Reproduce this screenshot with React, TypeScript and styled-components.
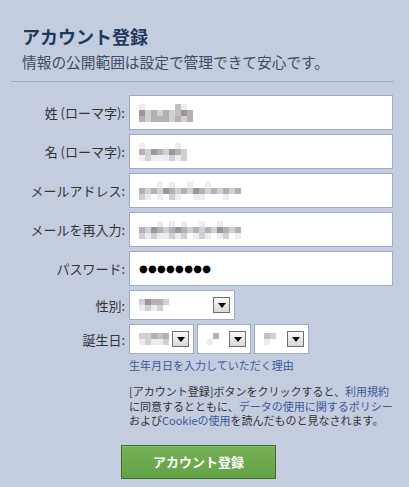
import React from 'react'
import styled, { createGlobalStyle } from 'styled-components'

const GlobalStyle = createGlobalStyle`
    html, body {
        margin: 0;
        padding: 0;
        background: #c4cce0;
    }
    body {
        font-family: 'Noto Sans CJK JP', 'Noto Sans', sans-serif;
        color: #333;
    }
`

const Page = styled.div`
    width: 409px;
    height: 487px;
    box-sizing: border-box;
    padding: 25px 15px 0 11px;
    overflow: hidden;
`
const Heading = styled.div`
    padding-left: 11px;
`
const Title = styled.h1`
    margin: 0;
    font-size: 18px;
    line-height: 22px;
    font-weight: bold;
    color: #1f3a5e;
`
const Subtitle = styled.div`
    margin-top: 6px;
    font-size: 14.7px;
    line-height: 18px;
    color: #3c4d68;
`
const Divider = styled.hr`
    margin: 10px 0 13px;
    border: 0;
    height: 1px;
    background: #9fadc6;
`
const Form = styled.div`
    display: flex;
    flex-direction: column;
    gap: 4px;
`
const Row = styled.div`
    display: grid;
    grid-template-columns: 114px auto;
    column-gap: 4px;
    align-items: center;
`
const Label = styled.label`
    font-size: 13px;
    text-align: right;
    color: #333;
    white-space: nowrap;
`
const TextBox = styled.div`
    box-sizing: border-box;
    width: 264px;
    height: 35px;
    background: #fff;
    border: 1px solid #9dabc8;
    display: flex;
    align-items: center;
    padding-left: 9px;
`
const Dots = styled.span`
    font-size: 10px;
    letter-spacing: 0.3px;
    color: #000;
    font-family: 'DejaVu Sans', sans-serif;
`
const Selects = styled.div`
    display: flex;
    gap: 3px;
`
const SelectBox = styled.div<{ $w: number }>`
    box-sizing: border-box;
    width: ${(p) => p.$w}px;
    height: 30px;
    background: #fff;
    border: 1px solid #9dabc8;
    display: flex;
    align-items: center;
    justify-content: space-between;
    padding: 0 4px 0 9px;
`
const Arrow = styled.span`
    box-sizing: border-box;
    width: 17px;
    height: 16px;
    border: 1px solid #707070;
    background: linear-gradient(#fafafa, #d8d8d8);
    display: flex;
    align-items: center;
    justify-content: center;
`
const Under = styled.div`
    margin-left: 118px;
`
const ReasonLink = styled.a`
    display: block;
    margin-top: 4px;
    font-size: 11px;
    line-height: 14px;
    color: #3b5998;
    text-decoration: none;
`
const Terms = styled.p`
    margin: 12px 0 0;
    font-size: 11px;
    line-height: 14.5px;
    color: #333;
    white-space: nowrap;
`
const Link = styled.a`
    color: #3b5998;
    text-decoration: none;
`
const Submit = styled.button`
    display: block;
    margin: 17px 0 0 110px;
    width: 155px;
    height: 34px;
    border: 1px solid #3d6e28;
    background: linear-gradient(#74b057, #63a345);
    box-shadow: inset 0 1px 0 #8cc270;
    color: #fff;
    font-family: 'Noto Sans CJK JP', sans-serif;
    font-size: 13px;
    font-weight: bold;
    cursor: pointer;
`

const shades: Record<string, string> = {
    '.': 'transparent',
    a: '#ecebef',
    b: '#d0cfd3',
    c: '#b4b0b4',
    d: '#9a969c',
    e: '#c9bfb8',
}

// pixelated (blurred) personal data
const Mosaic = ({ rows, cell = 6 }: { rows: string[]; cell?: number }) => {
    const w = rows[0].length * cell
    const h = rows.length * cell
    return (
        <svg width={w} height={h} viewBox={`0 0 ${w} ${h}`}>
            {rows.map((row, y) =>
                row.split('').map((ch, x) => (
                    <rect key={`${x}-${y}`} x={x * cell} y={y * cell} width={cell} height={cell} fill={shades[ch]} />
                ))
            )}
        </svg>
    )
}

const DownArrow = () => (
    <Arrow>
        <svg width="8" height="5" viewBox="0 0 8 5">
            <path d="M0 0h8L4 5z" fill="#000" />
        </svg>
    </Arrow>
)

const fields = [
    { label: '姓 (ローマ字):', rows: ['a.....ea.', 'dbcbcbedc', 'cbcccbcbc'] },
    { label: '名 (ローマ字):', rows: ['a.....a.', 'cbdcbdcb', 'abaaabab'] },
    { label: 'メールアドレス:', rows: ['...a.a..a..a.....', 'cbcbdcbcbdcbcbcbc', 'ba.a.ba..aa...a..'] },
    { label: 'メールを再入力:', rows: ['...a.a.a..a..a...', 'cbdcbcdcbcbcbdcbc', 'babaabab.aba.ab.a'] },
]

const App = () => {
    return (
        <Page>
            <GlobalStyle />
            <Heading>
                <Title>アカウント登録</Title>
                <Subtitle>情報の公開範囲は設定で管理できて安心です。</Subtitle>
            </Heading>
            <Divider />
            <Form>
                {fields.map((field) => (
                    <Row key={field.label}>
                        <Label>{field.label}</Label>
                        <TextBox>
                            <Mosaic rows={field.rows} />
                        </TextBox>
                    </Row>
                ))}
                <Row>
                    <Label>パスワード:</Label>
                    <TextBox>
                        <Dots>●●●●●●●●</Dots>
                    </TextBox>
                </Row>
                <Row>
                    <Label>性別:</Label>
                    <SelectBox $w={106}>
                        <Mosaic rows={['bdccb', 'abab.']} />
                        <DownArrow />
                    </SelectBox>
                </Row>
                <Row>
                    <Label>誕生日:</Label>
                    <Selects>
                        <SelectBox $w={65}>
                            <Mosaic rows={['bbcec', 'abaab']} />
                            <DownArrow />
                        </SelectBox>
                        <SelectBox $w={54}>
                            <Mosaic rows={['.c', 'a.']} />
                            <DownArrow />
                        </SelectBox>
                        <SelectBox $w={55}>
                            <Mosaic rows={['eb', 'a.']} />
                            <DownArrow />
                        </SelectBox>
                    </Selects>
                </Row>
            </Form>
            <Under>
                <ReasonLink href="#">生年月日を入力していただく理由</ReasonLink>
                <Terms>
                    [アカウント登録]ボタンをクリックすると、<Link href="#">利用規約</Link>
                    <br />
                    に同意するとともに、<Link href="#">データの使用に関するポリシー</Link>
                    <br />
                    および<Link href="#">Cookieの使用</Link>を読んだものと見なされます。
                </Terms>
            </Under>
            <Submit type="button">アカウント登録</Submit>
        </Page>
    )
}

export default App
